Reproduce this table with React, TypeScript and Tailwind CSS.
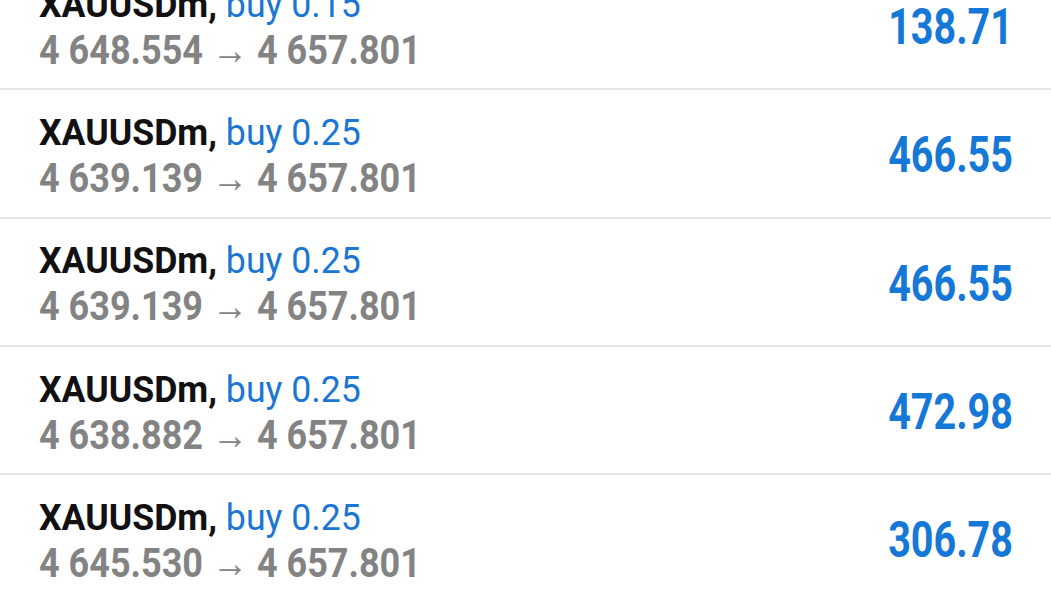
const rows = [
  { lots: "0.15", open: "4 648.554", close: "4 657.801", profit: "138.71" },
  { lots: "0.25", open: "4 639.139", close: "4 657.801", profit: "466.55" },
  { lots: "0.25", open: "4 639.139", close: "4 657.801", profit: "466.55" },
  { lots: "0.25", open: "4 638.882", close: "4 657.801", profit: "472.98" },
  { lots: "0.25", open: "4 645.530", close: "4 657.801", profit: "306.78" },
];

function TradeRow({ lots, open, close, profit }: (typeof rows)[number]) {
  return (
    <div className="flex h-[128.3px] shrink-0 items-center justify-between border-b-2 border-[#e6e6e6] pl-[39px] pr-[38px] pt-[5px]">
      <div className="flex flex-col">
        <div className="origin-left scale-x-[0.99] whitespace-nowrap text-[36px] leading-[46px]">
          <span className="font-bold text-[#111111]">XAUUSDm,</span>{" "}
          <span className="text-[#1a76d2]">buy {lots}</span>
        </div>
        <div className="origin-left scale-x-[0.9] whitespace-nowrap text-[40px] font-bold leading-[46px] text-[#838383]">
          {open} <span className="font-normal">→</span> {close}
        </div>
      </div>
      <div className="origin-right scale-x-[0.79] whitespace-nowrap text-[50px] font-bold text-[#1577d6]">{profit}</div>
    </div>
  );
}

export default function App() {
  return (
    <div className="h-[591px] w-full overflow-hidden bg-white" style={{ fontFamily: "Roboto, 'Liberation Sans', sans-serif" }}>
      <div className="-mt-[38px] flex flex-col">
        {rows.map((r, i) => (
          <TradeRow key={i} {...r} />
        ))}
      </div>
    </div>
  );
}
